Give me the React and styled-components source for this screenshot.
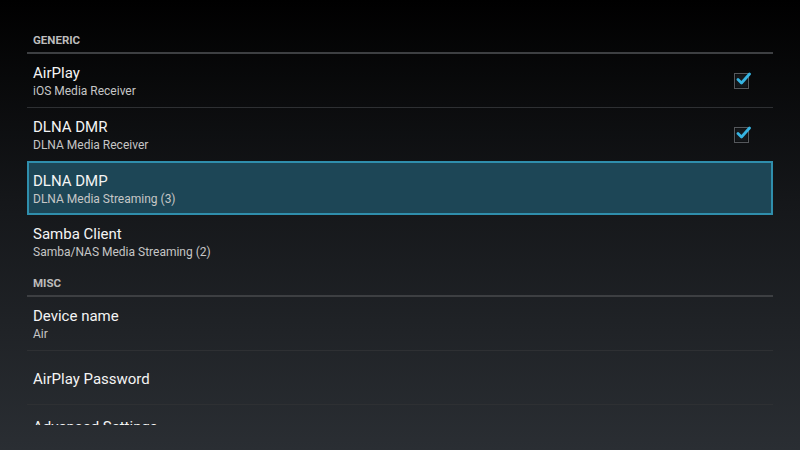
import React from 'react';
import styled, { createGlobalStyle } from 'styled-components';

const GlobalStyle = createGlobalStyle`
  html, body {
    margin: 0;
    padding: 0;
    width: 800px;
    height: 450px;
    overflow: hidden;
  }
  body {
    background: linear-gradient(to bottom, #000000 0%, #15171a 45%, #2a2e33 100%);
    font-family: Roboto, "Noto Sans", "Liberation Sans", sans-serif;
    color: #f2f2f2;
  }
`;

const Screen = styled.div`
  width: 800px;
  height: 450px;
  box-sizing: border-box;
  padding: 26px 27px 0 27px;
`;

const Viewport = styled.div`
  height: 399px;
  overflow: hidden;
`;

const SectionHeader = styled.div`
  height: 28px;
  box-sizing: border-box;
  padding: 8px 0 0 6px;
  font-size: 11.5px;
  line-height: 13px;
  font-weight: 700;
  color: #bcbcbc;
  text-transform: uppercase;
  border-bottom: 2px solid #3d3f42;
`;

const Row = styled.div`
  height: 54px;
  box-sizing: border-box;
  display: flex;
  align-items: ${(p) => (p.$top ? 'flex-start' : 'center')};
  padding: ${(p) => (p.$top ? '13px' : '2px')} 24px 0 ${(p) => (p.$selected ? '4px' : '6px')};
  border-style: solid;
  border-color: ${(p) => (p.$selected ? '#2f8eac' : p.$last ? 'transparent' : '#2e3033')};
  border-width: ${(p) => (p.$selected ? '2px' : '0 0 1px 0')};
  background: ${(p) => (p.$selected ? '#1d4656' : 'transparent')};
  margin-top: ${(p) => (p.$selected ? '-1px' : '0')};
`;

const TextCol = styled.div`
  flex: 1;
  display: flex;
  flex-direction: column;
  justify-content: center;
`;

const Title = styled.div`
  font-size: 15px;
  line-height: 18px;
  color: #f4f4f4;
`;

const Subtitle = styled.div`
  font-size: 12px;
  line-height: 15px;
  margin-top: 2px;
  color: #c6c6c6;
`;

const CheckBox = styled.div`
  position: relative;
  width: 13px;
  height: 14px;
  border: 1px solid #55585c;
  background: #15181b;
  box-shadow: inset 0 0 2px #000;
  margin-top: -2px;
  svg {
    position: absolute;
    left: 1px;
    top: -3px;
  }
`;

function Check() {
  return (
    <CheckBox>
      <svg width="15" height="15" viewBox="0 0 15 15">
        <path d="M2 8.5 L5.5 12 L13.5 3" fill="none" stroke="#36b4e2" strokeWidth="2.8" strokeLinecap="round" strokeLinejoin="round" />
      </svg>
    </CheckBox>
  );
}

function Item({ title, subtitle, checked, selected, last, top }) {
  return (
    <Row $selected={selected} $last={last} $top={top}>
      <TextCol>
        <Title>{title}</Title>
        {subtitle && <Subtitle>{subtitle}</Subtitle>}
      </TextCol>
      {checked && <Check />}
    </Row>
  );
}

export default function App() {
  return (
    <>
      <GlobalStyle />
      <Screen>
        <Viewport>
          <SectionHeader>Generic</SectionHeader>
          <Item title="AirPlay" subtitle="iOS Media Receiver" checked />
          <Item title="DLNA DMR" subtitle="DLNA Media Receiver" checked />
          <Item title="DLNA DMP" subtitle="DLNA Media Streaming (3)" selected />
          <Item title="Samba Client" subtitle="Samba/NAS Media Streaming (2)" last />
          <SectionHeader>Misc</SectionHeader>
          <Item title="Device name" subtitle="Air" />
          <Item title="AirPlay Password" />
          <Item title="Advanced Settings" top />
        </Viewport>
      </Screen>
    </>
  );
}
